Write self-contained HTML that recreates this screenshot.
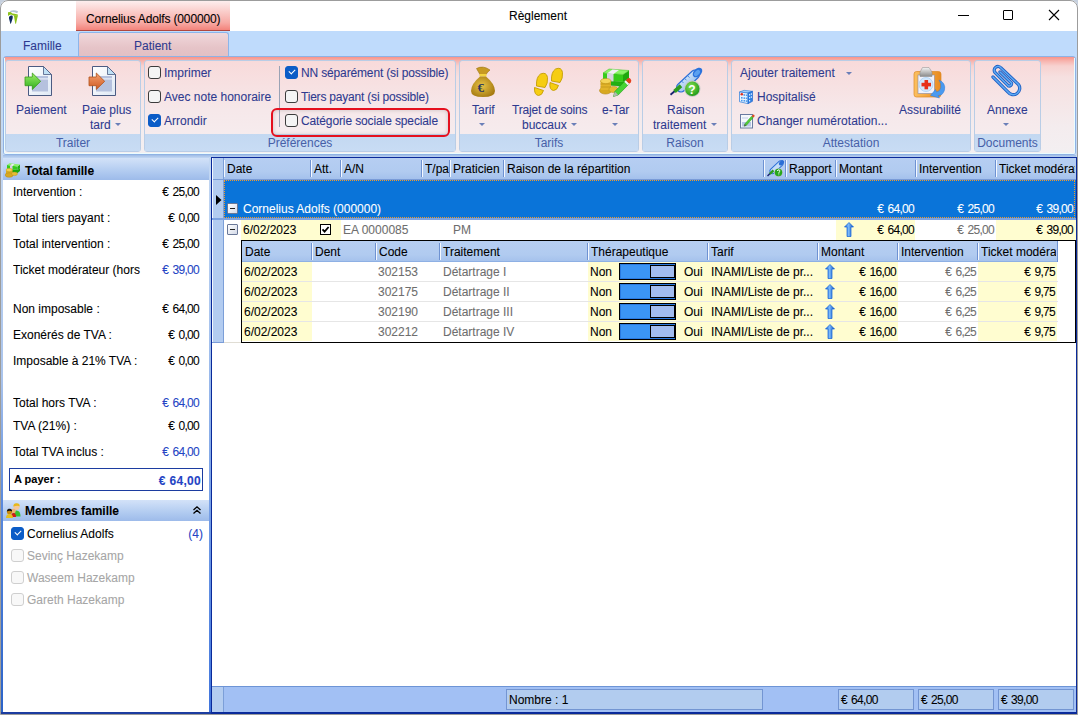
<!DOCTYPE html>
<html><head><meta charset="utf-8">
<style>
*{box-sizing:border-box}
html,body{margin:0;padding:0;width:1078px;height:715px;overflow:hidden;background:#c6d0de}
body{font-family:"Liberation Sans",sans-serif;font-size:12px;position:relative}
.a{position:absolute}
.t{position:absolute;white-space:nowrap;line-height:14px;-webkit-text-stroke:0.08px currentColor}
.n{font-size:12px;letter-spacing:-0.7px;word-spacing:1.5px}
.r{text-align:right}
.n.r{margin-right:0}
#win{position:absolute;left:0;top:0;width:1078px;height:715px;background:#c4d9f2;overflow:hidden;border-radius:8px 8px 0 0}
#frame{position:absolute;left:0;top:0;width:1078px;height:715px;border:1px solid #9c9c9c;border-radius:8px 8px 0 0;pointer-events:none}
#title{position:absolute;left:0;top:0;width:1078px;height:31px;background:#fff}
#tabrow{position:absolute;left:0;top:31px;width:1078px;height:26px;background:#bfdbfc}
#ctx{position:absolute;left:76px;top:1px;width:154px;height:30px;background:linear-gradient(#fdeeee,#f7aaa4 75%,#f3837b);border-bottom:1px solid #b0473f}
#ribbon{position:absolute;left:3px;top:56px;width:1073px;height:99px;border:1px solid #8fb2e4;border-radius:3px;background:linear-gradient(#f8948a 0,#f7b4ae 4px,#f7d2d0 9px,#f6e0e0 20px,#f4ecee 70px,#f3eff1 96px)}
#ribbon::after{content:"";position:absolute;left:0;right:0;top:1px;bottom:0;border:1px solid #eafcff;border-top:none;border-radius:0 0 2px 2px}
#below{position:absolute;left:3px;top:155px;width:1073px;height:3px;background:linear-gradient(#9fbce6,#c2d7f3)}
.grp{position:absolute;top:3px;height:92px;border:1px solid #b9cde6;border-radius:3px;background:linear-gradient(#f8dada,#f6e8ea 55%,#f6eef0)}
.glab{position:absolute;left:0;right:0;bottom:0;height:17px;background:linear-gradient(#c3d8f1,#c8dcf4);color:#4660a8;text-align:center;line-height:19px;font-size:12px}
.rb{color:#2e3a8f}
.cb{position:absolute;width:13px;height:13px;border:1px solid #3b3b3b;border-radius:3px;background:#f4f4f4}
.cb.on{background:#0b5cc7;border-color:#0b5cc7}
.cb.on::after{content:"";position:absolute;left:3px;top:2px;width:5px;height:3px;border-left:1px solid #fff;border-bottom:1px solid #fff;transform:rotate(-45deg)}
.arr{position:absolute;width:0;height:0;border-left:3px solid transparent;border-right:3px solid transparent;border-top:3px solid #6a7fb8}
/* left panel */
#lp{position:absolute;left:3px;top:157px;width:206px;height:556px;background:#fff}
.ph{position:absolute;left:0;width:206px;height:22px;background:linear-gradient(#d3e2f8,#b4cdf1 55%,#9dbbea);font-weight:bold;color:#000}
.blue{color:#2444c4}
/* grid */
#grid{position:absolute;left:210px;top:157px;width:866px;height:556px;background:#fff;border:2px solid #1c3faa;border-right:1px solid #1c3faa;border-top:1px solid #1c3faa}
.hdr{position:absolute;height:21px;background:#b1cbf0}
.sep{position:absolute;width:2px;border-left:1px solid #7b9fd6;border-right:1px solid #e3ecfa}
.yel{position:absolute;background:#fdfbd3}
.gray{color:#6e6e6e}
</style></head><body>
<div id="win">
  <div id="title">
    <svg class="a" style="left:0;top:0" width="30" height="30" viewBox="0 0 30 30">
      <path d="M10 11 Q14 9.3 18 11.3 Q17.8 12.8 17 13.2 Q14 11.5 10.5 12.2 Z" fill="#b4c4d4"/>
      <path d="M8 12.3 L10.5 12 L12.5 13.5 L14.5 13.8 L17.8 14.6 L17.8 15.8 L13.5 15.4 L11 14.4 L9.5 15 L8 16 Z" fill="#8cc21c"/>
      <path d="M9 17 Q10 14.8 12.3 15.6 Q13.2 16.8 12.6 18.5 L10.9 23.8 L10.4 23.8 L9 18.5 Z" fill="#0e2c5c"/>
      <path d="M13.8 15.2 L17.9 15.5 L16 23.8 L15.3 23.8 Z" fill="#8cc21c"/>
    </svg>
    <div class="t" style="left:509px;top:9px;color:#000">Règlement</div>
    <div class="a" style="left:958px;top:15px;width:11px;height:1px;background:#000"></div>
    <div class="a" style="left:1003px;top:10px;width:10px;height:10px;border:1px solid #000;border-radius:1px"></div>
    <svg class="a" style="left:1048px;top:9px" width="12" height="12" viewBox="0 0 12 12"><path d="M1 1 L11 11 M11 1 L1 11" stroke="#000" stroke-width="1.1"/></svg>
  </div>
  <div id="tabrow">
    <div class="t rb" style="left:23px;top:8px">Famille</div>
    <div class="a" style="left:78px;top:1px;width:151px;height:25px;border:1px solid #8cb5ea;border-bottom:none;border-radius:3px 3px 0 0;background:linear-gradient(#f0d8db,#e6c4c8 60%,#e2c0c4)"></div>
    <div class="t rb" style="left:134px;top:8px">Patient</div>
  </div>
  <div id="ctx"><div class="t" style="left:10px;top:11px;color:#000;letter-spacing:-0.15px">Cornelius Adolfs (000000)</div></div>

  <div id="ribbon"></div><div id="below"></div>
  <!-- ribbon groups in screen coords -->
  <div class="grp" style="left:5px;top:60px;width:136px"><div class="glab">Traiter</div></div>
  <div class="grp" style="left:144px;top:60px;width:312px"><div class="glab">Préférences</div></div>
  <div class="grp" style="left:459px;top:60px;width:180px"><div class="glab">Tarifs</div></div>
  <div class="grp" style="left:642px;top:60px;width:86px"><div class="glab">Raison</div></div>
  <div class="grp" style="left:731px;top:60px;width:240px"><div class="glab">Attestation</div></div>
  <div class="grp" style="left:974px;top:60px;width:67px"><div class="glab">Documents</div></div>

  <div id="rc">
  <!-- Traiter -->
  <svg class="a" style="left:20px;top:60px" width="40" height="40" viewBox="0 0 40 40">
    <defs>
      <linearGradient id="pg" x1="0" y1="0" x2="1" y2="1"><stop offset="0" stop-color="#ffffff"/><stop offset="1" stop-color="#dfe9f5"/></linearGradient>
      <linearGradient id="gA" x1="0" y1="0" x2="0" y2="1"><stop offset="0" stop-color="#9ef06a"/><stop offset="1" stop-color="#2fae1c"/></linearGradient>
      <linearGradient id="oA" x1="0" y1="0" x2="0" y2="1"><stop offset="0" stop-color="#f5a070"/><stop offset="1" stop-color="#cf5a22"/></linearGradient>
    </defs>
    <path d="M8.5 6.5 H23.5 L31.5 14.5 V35.5 H8.5 Z" fill="url(#pg)" stroke="#4b5b82"/>
    <path d="M23.5 6.5 V14.5 H31.5 Z" fill="#bfe0f5" stroke="#4b5b82" stroke-width="0.8"/>
    <rect x="12" y="16" width="16" height="15.5" fill="#b5c1de"/>
    <rect x="12" y="18.3" width="16" height="1.2" fill="#e9eef8"/>
    <path d="M5 17 H12.3 V13 L20.7 21.3 L12.3 29.5 V25.7 H5 Z" fill="url(#gA)" stroke="#3a9a1a" stroke-width="0.8"/>
  </svg>
  <svg class="a" style="left:84px;top:60px" width="40" height="40" viewBox="0 0 40 40">
    <path d="M8.5 6.5 H23.5 L31.5 14.5 V35.5 H8.5 Z" fill="url(#pg)" stroke="#4b5b82"/>
    <path d="M23.5 6.5 V14.5 H31.5 Z" fill="#bfe0f5" stroke="#4b5b82" stroke-width="0.8"/>
    <rect x="12" y="16" width="16" height="15.5" fill="#b5c1de"/>
    <rect x="12" y="18.3" width="16" height="1.2" fill="#e9eef8"/>
    <path d="M5 17 H12.3 V13 L20.7 21.3 L12.3 29.5 V25.7 H5 Z" fill="url(#oA)" stroke="#b0501a" stroke-width="0.8"/>
  </svg>
  <div class="t rb" style="left:16px;top:103px">Paiement</div>
  <div class="t rb" style="left:82px;top:103px">Paie plus</div>
  <div class="t rb" style="left:90px;top:118px">tard</div>
  <div class="arr" style="left:115px;top:123px"></div>

  <!-- Preferences -->
  <div class="cb" style="left:148px;top:66px"></div><div class="t rb" style="left:164px;top:66px">Imprimer</div>
  <div class="cb" style="left:148px;top:90px"></div><div class="t rb" style="left:164px;top:90px">Avec note honoraire</div>
  <div class="cb on" style="left:148px;top:114px"></div><div class="t rb" style="left:164px;top:114px">Arrondir</div>
  <div class="a" style="left:279px;top:66px;width:1px;height:61px;background:#9aa3b5"></div>
  <div class="cb on" style="left:285px;top:66px"></div><div class="t rb" style="left:301px;top:66px;letter-spacing:-0.15px">NN séparément (si possible)</div>
  <div class="cb" style="left:285px;top:90px"></div><div class="t rb" style="left:301px;top:90px;letter-spacing:-0.2px">Tiers payant (si possible)</div>
  <div class="cb" style="left:285px;top:114px"></div><div class="t rb" style="left:301px;top:114px;letter-spacing:-0.12px">Catégorie sociale speciale</div>
  <div class="a" style="left:271px;top:108px;width:179px;height:29px;border:2px solid #e5101e;border-radius:6px;box-shadow:inset 0 0 4px rgba(0,0,0,0.18)"></div>

  <!-- Tarifs -->
  <svg class="a" style="left:465px;top:60px" width="40" height="40" viewBox="0 0 40 40">
    <defs><radialGradient id="bag" cx="0.45" cy="0.45" r="0.6"><stop offset="0" stop-color="#e9c548"/><stop offset="1" stop-color="#a57a10"/></radialGradient></defs>
    <path d="M11.5 8.5 Q18 5 25 10 Q22 12.5 21 14.5 H15 Q13.5 12 11.5 8.5 Z" fill="#c89a22" stroke="#9a7412" stroke-width="0.6"/>
    <rect x="14.5" y="14" width="7" height="2.5" fill="#f4d440"/>
    <path d="M15 16.5 Q6 24 6 31 Q6 37 18 37 Q30 37 30 31 Q30 24 21 16.5 Z" fill="url(#bag)"/>
    <text x="12.5" y="32" font-family="Liberation Serif" font-size="13" fill="#28345e" font-weight="bold">€</text>
  </svg>
  <svg class="a" style="left:528px;top:60px" width="44" height="40" viewBox="0 0 44 40">
    <g fill="#f6cd12" stroke="#c49d05" stroke-width="0.9">
      <path d="M8.5 26 Q8 17 12.5 14 Q18.5 11.5 19.5 17.5 Q20 23.5 17 27.5 Z"/>
      <path d="M6.5 27.5 L15.5 30.5 Q14 35.5 10.5 35.5 Q6 35 6.5 27.5 Z"/>
      <path d="M23.5 21 Q23 12 27.5 9 Q33.5 6.5 34.5 12.5 Q35 18.5 32 22.5 Z"/>
      <path d="M22 22.5 L30.5 25.5 Q29 30.5 25.5 30.5 Q21 30 22 22.5 Z"/>
    </g>
  </svg>
  <svg class="a" style="left:595px;top:60px" width="40" height="40" viewBox="0 0 40 40">
    <path d="M8 20 L28 22 L34 18 V22.5 L28 26.5 L8 24.5 Z" fill="#22b012" stroke="#1a9010" stroke-width="0.5"/>
    <path d="M8 13 L28 14.5 V22 L8 20 Z" fill="#36cc1a"/>
    <path d="M28 14.5 L34 10.5 V18 L28 22 Z" fill="#1fa80e"/>
    <path d="M8 13 L14 9 L34 10.5 L28 14.5 Z" fill="#8cf46a" stroke="#3ac020" stroke-width="0.5"/>
    <path d="M17.5 9.6 L24 10 L18.5 13.9 L12 13.4 Z" fill="#f2f0f6"/>
    <path d="M12 13.4 L18.5 13.9 V21.6 L12 21 Z" fill="#d6d4de"/>
    <ellipse cx="10.5" cy="30.5" rx="6" ry="3.6" fill="#d8a820" stroke="#a88010" stroke-width="0.5"/>
    <rect x="5.5" y="21" width="10.5" height="9" fill="#e2b42a"/>
    <path d="M5.5 24 H16 M5.5 27 H16" stroke="#b88e14" stroke-width="0.6"/>
    <ellipse cx="10.8" cy="21" rx="5.3" ry="2.6" fill="#f4d458" stroke="#b88e14" stroke-width="0.5"/>
    <ellipse cx="18.5" cy="29.5" rx="4.5" ry="3" fill="#e6bb32" stroke="#b08a12" stroke-width="0.5"/>
    <path d="M18.5 36.5 L19.8 31.5 L30.5 20.5 L34 24 L23.2 35 Z" fill="#46d434" stroke="#1f9a16" stroke-width="0.6"/>
    <path d="M18.5 36.5 L19.8 31.5 L23.2 35 Z" fill="#b4b4b4"/>
    <path d="M29.3 21.7 L30.8 20.2 L34.3 23.7 L32.8 25.2 Z" fill="#f4f4f4"/>
    <path d="M30.8 20.2 L32.3 18.7 Q34 17.3 35.6 18.9 Q37 20.6 35.8 22.2 L34.3 23.7 Z" fill="#e4401e"/>
  </svg>
  <div class="t rb" style="left:472px;top:103px">Tarif</div>
  <div class="arr" style="left:479px;top:123px"></div>
  <div class="t rb" style="left:512px;top:103px;letter-spacing:-0.2px">Trajet de soins</div>
  <div class="t rb" style="left:522px;top:118px">buccaux</div>
  <div class="arr" style="left:571px;top:123px"></div>
  <div class="t rb" style="left:602px;top:103px">e-Tar</div>
  <div class="arr" style="left:612px;top:123px"></div>

  <!-- Raison -->
  <svg class="a" style="left:662px;top:60px" width="44" height="40" viewBox="0 0 44 40">
    <defs><radialGradient id="qg" cx="0.4" cy="0.35" r="0.7"><stop offset="0" stop-color="#86e254"/><stop offset="1" stop-color="#1c9816"/></radialGradient>
    <linearGradient id="syb" x1="0" y1="0" x2="1" y2="1"><stop offset="0" stop-color="#e4f0fc"/><stop offset="1" stop-color="#8ab8ec"/></linearGradient></defs>
    <line x1="8.5" y1="34.8" x2="14" y2="30" stroke="#1a2470" stroke-width="1.8"/>
    <line x1="19" y1="27.5" x2="33" y2="14.5" stroke="#2a6ed6" stroke-width="10" stroke-linecap="round"/>
    <line x1="19" y1="27.5" x2="33" y2="14.5" stroke="url(#syb)" stroke-width="7.6" stroke-linecap="round"/>
    <path d="M19.5 21 l2 2 M22.5 18.3 l2 2 M25.5 15.6 l2 2" stroke="#3a80e0" stroke-width="0.9"/>
    <ellipse cx="35.5" cy="12.5" rx="3.8" ry="5.6" transform="rotate(45 35.5 12.5)" fill="#2a72dc"/>
    <ellipse cx="35" cy="13" rx="2.2" ry="3.6" transform="rotate(45 35 13)" fill="#5aa0f0"/>
    <line x1="12.5" y1="31.5" x2="19" y2="25.8" stroke="#2c9c20" stroke-width="3.8"/>
    <circle cx="30.3" cy="28.8" r="8.2" fill="#c8c8c8"/>
    <circle cx="30.3" cy="28.8" r="7.2" fill="url(#qg)"/>
    <text x="26.2" y="33.5" font-family="Liberation Sans" font-size="12" font-weight="bold" fill="#fff">?</text>
  </svg>
  <div class="t rb" style="left:667px;top:103px">Raison</div>
  <div class="t rb" style="left:653px;top:118px">traitement</div>
  <div class="arr" style="left:711px;top:123px"></div>

  <!-- Attestation -->
  <div class="t rb" style="left:740px;top:66px">Ajouter traitement</div>
  <div class="arr" style="left:846px;top:72px"></div>
  <svg class="a" style="left:738px;top:89px" width="16" height="16" viewBox="0 0 16 16">
    <path d="M1.5 3 L6 1.3 L14.5 2.3 L10 4 Z" fill="#a4d0fa" stroke="#2a7ad8" stroke-width="0.6"/>
    <path d="M1.5 3 L10 4 V14.7 L1.5 12.7 Z" fill="#eaf5ff" stroke="#2a7ad8" stroke-width="0.7"/>
    <path d="M10 4 L14.5 2.3 V12.3 L10 14.7 Z" fill="#2f80e4" stroke="#1a5ec8" stroke-width="0.6"/>
    <g fill="#4a9aee"><rect x="5.5" y="5.2" width="1.6" height="1.6"/><rect x="7.8" y="5.5" width="1.6" height="1.6"/>
    <rect x="3" y="8" width="1.6" height="1.6"/><rect x="5.5" y="8.3" width="1.6" height="1.6"/><rect x="7.8" y="8.5" width="1.6" height="1.6"/>
    <rect x="3" y="10.8" width="1.6" height="1.6"/><rect x="5.5" y="11" width="1.6" height="1.6"/><rect x="7.8" y="11.3" width="1.6" height="1.6"/></g>
    <g fill="#d8ecff"><rect x="11" y="5" width="1.2" height="1.5"/><rect x="12.8" y="4.3" width="1.2" height="1.5"/><rect x="11" y="8" width="1.2" height="1.5"/><rect x="12.8" y="7.3" width="1.2" height="1.5"/><rect x="11" y="11" width="1.2" height="1.5"/></g>
    <circle cx="3.8" cy="5.2" r="1.3" fill="#e03020"/>
  </svg>
  <div class="t rb" style="left:757px;top:90px">Hospitalisé</div>
  <svg class="a" style="left:739px;top:112px" width="16" height="17" viewBox="0 0 16 17">
    <rect x="1.5" y="2.5" width="12" height="13.5" fill="#f6f8fc" stroke="#6a7aa0"/>
    <rect x="3" y="10" width="9" height="4.5" fill="#b8c6e4"/>
    <path d="M3 6 h6" stroke="#c0cce6"/>
    <path d="M5.2 14.2 L5.8 12 L12.6 4.2 L14.2 5.6 L7.3 13.4 Z" fill="#52cc36" stroke="#2a9a1a" stroke-width="0.5"/>
    <path d="M12.6 4.2 L13.6 3 Q14.6 2.2 15.4 3 Q16 4 15.2 4.8 L14.2 5.6 Z" fill="#e44a22"/>
    <path d="M5.2 14.2 L5.8 12 L7.3 13.4 Z" fill="#555"/>
  </svg>
  <div class="t rb" style="left:757px;top:114px;letter-spacing:0.05px">Changer numérotation...</div>
  <svg class="a" style="left:905px;top:60px" width="50" height="40" viewBox="0 0 50 40">
    <defs><linearGradient id="cbd" x1="0" y1="0" x2="1" y2="0"><stop offset="0" stop-color="#fcc060"/><stop offset="1" stop-color="#e88a20"/></linearGradient>
    <linearGradient id="clp" x1="0" y1="0" x2="0" y2="1"><stop offset="0" stop-color="#f4f4f4"/><stop offset="1" stop-color="#8a8a8a"/></linearGradient></defs>
    <rect x="9" y="11.5" width="27" height="25.5" rx="2.5" fill="url(#cbd)" stroke="#dc8a24" stroke-width="0.7"/>
    <rect x="13" y="15" width="16.5" height="18.5" fill="#f2f2fb" stroke="#8888a0" stroke-width="0.6"/>
    <path d="M15 16.5 V12 L17.5 7.5 H24 L27 12 V16.5 Z" fill="url(#clp)" stroke="#888" stroke-width="0.5"/>
    <circle cx="21" cy="24.5" r="7" fill="#d4e8fc" stroke="#a8d0f6" stroke-width="0.8"/>
    <rect x="16.5" y="22.8" width="9.5" height="3.6" fill="#e8301a"/>
    <rect x="19.5" y="20" width="3.6" height="9.3" fill="#e8301a"/>
    <path d="M34 20 Q41 23 39.5 30 Q38 35.5 33 35.5 L34.5 38 L25.5 35.5 L30.5 29.5 L31.5 32 Q35 31.5 35.8 27.5 Q36.5 23.5 34 20 Z" fill="#4a9af0" stroke="#2f7ad8" stroke-width="0.5"/>
  </svg>
  <div class="t rb" style="left:899px;top:103px">Assurabilité</div>

  <!-- Documents -->
  <svg class="a" style="left:983px;top:60px" width="45" height="40" viewBox="0 0 45 40">
    <path d="M10 17 L25 32 A6 6 0 0 0 35.5 24.5 L18 8 A3.5 3.5 0 0 0 12 12.5 L25.5 26 A2.5 2.5 0 0 0 28.5 23 L17 12" fill="none" stroke="#2060c4" stroke-width="3.3" stroke-linecap="round"/>
    <path d="M10 17 L25 32 A6 6 0 0 0 35.5 24.5 L18 8 A3.5 3.5 0 0 0 12 12.5 L25.5 26 A2.5 2.5 0 0 0 28.5 23 L17 12" fill="none" stroke="#5eaaf4" stroke-width="1.5" stroke-linecap="round"/>
  </svg>
  <div class="t rb" style="left:987px;top:103px">Annexe</div>
  <div class="arr" style="left:1003px;top:123px"></div>
</div>
  <div class="a" style="left:1px;top:154px;width:2px;height:560px;background:linear-gradient(#c4d8f2,#aac4ec 40%,#5a8ade 62%,#2a62c8);border-radius:0 0 0 4px"></div>
<div class="a" style="left:209px;top:157px;width:2px;height:557px;background:linear-gradient(#c4d8f2,#a8c4ee 30%,#7aa2e6 60%,#3f74dc)"></div>
<div class="a" style="left:3px;top:180px;width:206px;height:532px;background:#fff"></div>
<div class="ph" style="left:3px;top:158px;height:22px"></div>
<svg class="a" style="left:4px;top:161px" width="18" height="17" viewBox="0 0 18 17">
      <path d="M3 7.5 L13.5 9 L16 7 V10 L13.5 12 L3 10.5 Z" fill="#1aa80e"/>
      <path d="M3 4 L13.5 5.5 V9 L3 7.5 Z" fill="#34cc1a"/>
      <path d="M13.5 5.5 L16 3.5 V7 L13.5 9 Z" fill="#20b010"/>
      <path d="M3 4 L5.5 2.3 L16 3.5 L13.5 5.5 Z" fill="#8cf06a"/>
      <path d="M8 2.9 L10.5 3.2 L8.5 4.9 L6 4.6 Z" fill="#f0e8f8"/>
      <path d="M6 4.6 L8.5 4.9 V8.4 L6 8.1 Z" fill="#d8cce6"/>
      <rect x="2" y="9" width="6.5" height="5" fill="#dcae22"/>
      <ellipse cx="5.2" cy="14" rx="4" ry="2.3" fill="#d8a820" stroke="#b08810" stroke-width="0.4"/>
      <ellipse cx="5.2" cy="9" rx="3.2" ry="1.7" fill="#f2d050" stroke="#b88e14" stroke-width="0.4"/>
      <ellipse cx="10.5" cy="12.8" rx="3" ry="1.8" fill="#e8bd34" stroke="#b08a12" stroke-width="0.4"/>
    </svg>
<div class="t " style="left:25px;top:164px;font-weight:bold;font-size:12px">Total famille</div>
<div class="t" style="left:13px;top:185px;width:129px;overflow:hidden">Intervention :</div>
<div class="t n r " style="right:879px;top:185px;">€ 25,00</div>
<div class="t" style="left:13px;top:211px;width:129px;overflow:hidden">Total tiers payant :</div>
<div class="t n r " style="right:879px;top:211px;">€ 0,00</div>
<div class="t" style="left:13px;top:237px;width:129px;overflow:hidden">Total intervention :</div>
<div class="t n r " style="right:879px;top:237px;">€ 25,00</div>
<div class="t" style="left:13px;top:263px;width:129px;overflow:hidden">Ticket modérateur (hors TVA) :</div>
<div class="t n r blue" style="right:879px;top:263px;">€ 39,00</div>
<div class="t" style="left:13px;top:302px;width:129px;overflow:hidden">Non imposable :</div>
<div class="t n r " style="right:879px;top:302px;">€ 64,00</div>
<div class="t" style="left:13px;top:328px;width:129px;overflow:hidden">Exonérés de TVA :</div>
<div class="t n r " style="right:879px;top:328px;">€ 0,00</div>
<div class="t" style="left:13px;top:354px;width:129px;overflow:hidden">Imposable à 21% TVA :</div>
<div class="t n r " style="right:879px;top:354px;">€ 0,00</div>
<div class="t" style="left:13px;top:396px;width:129px;overflow:hidden">Total hors TVA :</div>
<div class="t n r blue" style="right:879px;top:396px;">€ 64,00</div>
<div class="t" style="left:13px;top:419px;width:129px;overflow:hidden">TVA (21%) :</div>
<div class="t n r " style="right:879px;top:419px;">€ 0,00</div>
<div class="t" style="left:13px;top:445px;width:129px;overflow:hidden">Total TVA inclus :</div>
<div class="t n r blue" style="right:879px;top:445px;">€ 64,00</div>
<div class="a" style="left:9px;top:468px;width:194px;height:23px;border:1px solid #1c3ca0"></div>
<div class="t " style="left:14px;top:472px;font-weight:bold;font-size:11px">A payer :</div>
<div class="t r blue" style="right:879px;top:474px;font-weight:bold;font-size:12px;letter-spacing:0.3px;margin-right:-2px">€ 64,00</div>
<div class="ph" style="left:3px;top:500px;height:21px"></div>
<svg class="a" style="left:5px;top:502px" width="17" height="17" viewBox="0 0 17 17">
    <circle cx="11.5" cy="5" r="3" fill="#f5c89a"/><path d="M8.3 4.5 Q8.5 1 11.5 1.2 Q14.8 1 14.7 4.5 Q13 2.8 8.3 4.5 Z" fill="#e8b818"/>
    <path d="M7.5 14.5 Q7.5 8.5 11.5 8.5 Q15.5 8.5 15.5 14.5 Z" fill="#38c030"/>
    <circle cx="8.5" cy="9" r="2.3" fill="#f0b070"/>
    <path d="M6 15 Q6 11 8.5 11 Q11 11 11 15 Z" fill="#d01818"/>
    <circle cx="4.5" cy="9.8" r="2.6" fill="#c88a10"/><path d="M1.8 9.5 Q2 6.5 4.5 6.8 Q7.3 6.8 7 9.5 Q5 8 1.8 9.5 Z" fill="#111"/>
    <path d="M1 16 Q1 12 4.5 12 Q8 12 8 16 Z" fill="#e6c020"/>
  </svg>
<div class="t " style="left:25px;top:504px;font-weight:bold;font-size:12px">Membres famille</div>
<svg class="a" style="left:192px;top:505px" width="10" height="10" viewBox="0 0 10 10"><path d="M1.5 5 L5 1.8 L8.5 5 M1.5 8.5 L5 5.3 L8.5 8.5" fill="none" stroke="#000" stroke-width="1.3"/></svg>
<div class="cb on" style="left:11px;top:527px"></div>
<div class="t " style="left:27px;top:527px;">Cornelius Adolfs</div>
<div class="t blue r" style="right:875px;top:527px">(4)</div>
<div class="cb" style="left:11px;top:549px;border-color:#cfcfcf;background:#f8f8f8"></div>
<div class="t " style="left:27px;top:549px;color:#a6a6a6">Sevinç Hazekamp</div>
<div class="cb" style="left:11px;top:571px;border-color:#cfcfcf;background:#f8f8f8"></div>
<div class="t " style="left:27px;top:571px;color:#a6a6a6">Waseem Hazekamp</div>
<div class="cb" style="left:11px;top:593px;border-color:#cfcfcf;background:#f8f8f8"></div>
<div class="t " style="left:27px;top:593px;color:#a6a6a6">Gareth Hazekamp</div>
<div class="a" style="left:1px;top:712px;width:210px;height:2px;background:#1c3ca0"></div>
  <div class="a" style="left:211px;top:157px;width:866px;height:557px;background:#fff"></div>
<div class="a" style="left:212px;top:158px;width:12px;height:185px;background:#b3ccf0"></div>
<div class="a" style="left:223px;top:158px;width:1px;height:185px;background:#7c9fd8"></div>
<div class="a" style="left:224px;top:158px;width:852px;height:21px;background:linear-gradient(#b6cef2,#b1cbf0 65%,#a4c1ec)"></div>
<div class="a" style="left:212px;top:179px;width:864px;height:1px;background:#7a9cd8"></div>
<div class="a" style="left:310px;top:160px;width:1px;height:17px;background:#6e92d2"></div><div class="a" style="left:311px;top:160px;width:1px;height:17px;background:#f4f8ff"></div>
<div class="a" style="left:340px;top:160px;width:1px;height:17px;background:#6e92d2"></div><div class="a" style="left:341px;top:160px;width:1px;height:17px;background:#f4f8ff"></div>
<div class="a" style="left:421px;top:160px;width:1px;height:17px;background:#6e92d2"></div><div class="a" style="left:422px;top:160px;width:1px;height:17px;background:#f4f8ff"></div>
<div class="a" style="left:449px;top:160px;width:1px;height:17px;background:#6e92d2"></div><div class="a" style="left:450px;top:160px;width:1px;height:17px;background:#f4f8ff"></div>
<div class="a" style="left:503px;top:160px;width:1px;height:17px;background:#6e92d2"></div><div class="a" style="left:504px;top:160px;width:1px;height:17px;background:#f4f8ff"></div>
<div class="a" style="left:763px;top:160px;width:1px;height:17px;background:#6e92d2"></div><div class="a" style="left:764px;top:160px;width:1px;height:17px;background:#f4f8ff"></div>
<div class="a" style="left:785px;top:160px;width:1px;height:17px;background:#6e92d2"></div><div class="a" style="left:786px;top:160px;width:1px;height:17px;background:#f4f8ff"></div>
<div class="a" style="left:835px;top:160px;width:1px;height:17px;background:#6e92d2"></div><div class="a" style="left:836px;top:160px;width:1px;height:17px;background:#f4f8ff"></div>
<div class="a" style="left:915px;top:160px;width:1px;height:17px;background:#6e92d2"></div><div class="a" style="left:916px;top:160px;width:1px;height:17px;background:#f4f8ff"></div>
<div class="a" style="left:995px;top:160px;width:1px;height:17px;background:#6e92d2"></div><div class="a" style="left:996px;top:160px;width:1px;height:17px;background:#f4f8ff"></div>
<div class="a" style="left:212px;top:158px;width:1px;height:185px;background:#f4f8ff"></div>
<div class="a" style="left:224px;top:160px;width:1px;height:17px;background:#f4f8ff"></div>
<div class="t" style="left:227px;top:162px;">Date</div>
<div class="t" style="left:314px;top:162px;">Att.</div>
<div class="t" style="left:344px;top:162px;">A/N</div>
<div class="t" style="left:425px;top:162px;width:24px;overflow:hidden;">T/pa</div>
<div class="t" style="left:453px;top:162px;">Praticien</div>
<div class="t" style="left:507px;top:162px;">Raison de la répartition</div>
<div class="t" style="left:789px;top:162px;">Rapport</div>
<div class="t" style="left:839px;top:162px;">Montant</div>
<div class="t" style="left:919px;top:162px;">Intervention</div>
<div class="t" style="left:999px;top:162px;width:76px;overflow:hidden;">Ticket modérateur</div>
<svg class="a" style="left:766px;top:159px" width="19" height="19" viewBox="0 0 19 19"><line x1="1.5" y1="17" x2="4.5" y2="14" stroke="#1a2470" stroke-width="1.4"/><line x1="6.5" y1="12" x2="14.5" y2="4.5" stroke="#2a6ed6" stroke-width="6" stroke-linecap="round"/><line x1="6.5" y1="12" x2="14.5" y2="4.5" stroke="#c4def8" stroke-width="4.2" stroke-linecap="round"/><ellipse cx="15.5" cy="3.8" rx="2" ry="3" transform="rotate(45 15.5 3.8)" fill="#2a6ed6"/><line x1="3.8" y1="14.8" x2="7.5" y2="11.3" stroke="#2c9c20" stroke-width="2.4"/><circle cx="12.5" cy="13.5" r="4.3" fill="#b8b8c0"/><circle cx="12.5" cy="13.5" r="3.7" fill="#26a81a"/><path d="M11.3 12 Q11.8 10.6 13 10.8 Q14.3 11.2 13.6 12.6 Q12.8 13.4 12.8 14.6 M12.8 15.6 V16.2" stroke="#fff" stroke-width="1" fill="none"/></svg>
<div class="a" style="left:224px;top:180px;width:852px;height:38px;background:#0a74d9"></div>
<div class="a" style="left:224px;top:180px;width:851px;height:38px;border:1px dotted #f39a2b"></div>
<div class="a" style="left:212px;top:218px;width:864px;height:2px;background:#7da3e2"></div>
<svg class="a" style="left:215px;top:194px" width="8" height="12" viewBox="0 0 8 12"><path d="M1 1 L6.5 6 L1 11 Z" fill="#000"/></svg>
<div class="a" style="left:227px;top:203px;width:11px;height:11px;border:1px solid #6a7898;border-radius:1px;background:linear-gradient(135deg,#ffffff,#d3d9e8)"></div><div class="a" style="left:230px;top:208px;width:5px;height:1px;background:#222"></div>
<div class="t" style="left:243px;top:202px;color:#fff">Cornelius Adolfs (000000)</div>
<div class="t n r" style="right:164px;top:202px;color:#fff">€ 64,00</div>
<div class="t n r" style="right:84px;top:202px;color:#fff">€ 25,00</div>
<div class="t n r" style="right:5px;top:202px;color:#fff">€ 39,00</div>
<div class="a" style="left:227px;top:224px;width:11px;height:11px;border:1px solid #6a7898;border-radius:1px;background:linear-gradient(135deg,#ffffff,#d3d9e8)"></div><div class="a" style="left:230px;top:229px;width:5px;height:1px;background:#222"></div>
<div class="a" style="left:241px;top:220px;width:100px;height:20px;background:#fffdd0"></div>
<div class="a" style="left:836px;top:220px;width:79px;height:20px;background:#fffdd0"></div>
<div class="a" style="left:996px;top:220px;width:80px;height:20px;background:#fffdd0"></div>
<div class="t" style="left:243px;top:223px">6/02/2023</div>
<div class="a" style="left:320px;top:224px;width:11px;height:11px;border:1.5px solid #000;background:#fff"></div>
<svg class="a" style="left:320px;top:224px" width="11" height="11" viewBox="0 0 11 11"><path d="M2.5 5.3 L4.6 7.6 L8.6 3" fill="none" stroke="#000" stroke-width="1.8"/></svg>
<div class="t gray" style="left:343px;top:223px">EA 0000085</div>
<div class="t gray" style="left:453px;top:223px">PM</div>
<svg class="a" style="left:844px;top:222px" width="10" height="15" viewBox="0 0 10 15"><defs><linearGradient id="ua844222" x1="0" x2="1"><stop offset="0" stop-color="#1a6ae0"/><stop offset="0.45" stop-color="#7ab8f8"/><stop offset="1" stop-color="#0a50c4"/></linearGradient></defs><path d="M5 0.5 L9.5 5 L7 5 L7 14.5 L3 14.5 L3 5 L0.5 5 Z" fill="url(#ua844222)" stroke="#1060d8" stroke-width="0.7"/></svg>
<div class="t n r" style="right:164px;top:223px">€ 64,00</div>
<div class="t n r gray" style="right:84px;top:223px">€ 25,00</div>
<div class="t n r" style="right:5px;top:223px">€ 39,00</div>
<div class="a" style="left:241px;top:240px;width:835px;height:103px;border:1px solid #000;background:#fff"></div>
<div class="a" style="left:242px;top:241px;width:815px;height:21px;background:linear-gradient(#b6cef2,#b1cbf0 65%,#a4c1ec)"></div>
<div class="a" style="left:242px;top:261px;width:815px;height:1px;background:#8eb0e4"></div>
<div class="a" style="left:311px;top:243px;width:1px;height:17px;background:#6e92d2"></div><div class="a" style="left:312px;top:243px;width:1px;height:17px;background:#f4f8ff"></div>
<div class="a" style="left:375px;top:243px;width:1px;height:17px;background:#6e92d2"></div><div class="a" style="left:376px;top:243px;width:1px;height:17px;background:#f4f8ff"></div>
<div class="a" style="left:439px;top:243px;width:1px;height:17px;background:#6e92d2"></div><div class="a" style="left:440px;top:243px;width:1px;height:17px;background:#f4f8ff"></div>
<div class="a" style="left:587px;top:243px;width:1px;height:17px;background:#6e92d2"></div><div class="a" style="left:588px;top:243px;width:1px;height:17px;background:#f4f8ff"></div>
<div class="a" style="left:707px;top:243px;width:1px;height:17px;background:#6e92d2"></div><div class="a" style="left:708px;top:243px;width:1px;height:17px;background:#f4f8ff"></div>
<div class="a" style="left:817px;top:243px;width:1px;height:17px;background:#6e92d2"></div><div class="a" style="left:818px;top:243px;width:1px;height:17px;background:#f4f8ff"></div>
<div class="a" style="left:897px;top:243px;width:1px;height:17px;background:#6e92d2"></div><div class="a" style="left:898px;top:243px;width:1px;height:17px;background:#f4f8ff"></div>
<div class="a" style="left:977px;top:243px;width:1px;height:17px;background:#6e92d2"></div><div class="a" style="left:978px;top:243px;width:1px;height:17px;background:#f4f8ff"></div>
<div class="a" style="left:1057px;top:241px;width:1px;height:21px;background:#6e92d2"></div>
<div class="t" style="left:245px;top:245px;">Date</div>
<div class="t" style="left:315px;top:245px;">Dent</div>
<div class="t" style="left:379px;top:245px;">Code</div>
<div class="t" style="left:443px;top:245px;">Traitement</div>
<div class="t" style="left:591px;top:245px;">Thérapeutique</div>
<div class="t" style="left:711px;top:245px;">Tarif</div>
<div class="t" style="left:821px;top:245px;">Montant</div>
<div class="t" style="left:901px;top:245px;">Intervention</div>
<div class="t" style="left:981px;top:245px;width:75px;overflow:hidden;">Ticket modérateur</div>
<div class="a" style="left:242px;top:262px;width:70px;height:19px;background:#fffdd0"></div>
<div class="a" style="left:588px;top:262px;width:310px;height:19px;background:#fffdd0"></div>
<div class="a" style="left:978px;top:262px;width:79px;height:19px;background:#fffdd0"></div>
<div class="a" style="left:242px;top:281px;width:816px;height:1px;background:#e6e6e6"></div>
<div class="t" style="left:244px;top:265px">6/02/2023</div>
<div class="t gray" style="left:378px;top:265px">302153</div>
<div class="t gray" style="left:443px;top:265px">Détartrage I</div>
<div class="t" style="left:590px;top:265px">Non</div>
<div class="a" style="left:619px;top:263px;width:57px;height:17px;border:1px solid #000;background:#3b95f5;box-shadow:inset 0 0 0 1px #2a7ae0"></div>
<div class="a" style="left:650px;top:265px;width:25px;height:13px;border:1px solid #000;background:#a2bdf0"></div>
<div class="t" style="left:684px;top:265px">Oui</div>
<div class="t" style="left:711px;top:265px">INAMI/Liste de pr...</div>
<svg class="a" style="left:825px;top:264px" width="10" height="15" viewBox="0 0 10 15"><defs><linearGradient id="ua825264" x1="0" x2="1"><stop offset="0" stop-color="#1a6ae0"/><stop offset="0.45" stop-color="#7ab8f8"/><stop offset="1" stop-color="#0a50c4"/></linearGradient></defs><path d="M5 0.5 L9.5 5 L7 5 L7 14.5 L3 14.5 L3 5 L0.5 5 Z" fill="url(#ua825264)" stroke="#1060d8" stroke-width="0.7"/></svg>
<div class="t n r" style="right:182px;top:265px">€ 16,00</div>
<div class="t n r gray" style="right:102px;top:265px">€ 6,25</div>
<div class="t n r" style="right:23px;top:265px">€ 9,75</div>
<div class="a" style="left:242px;top:282px;width:70px;height:19px;background:#fffdd0"></div>
<div class="a" style="left:588px;top:282px;width:310px;height:19px;background:#fffdd0"></div>
<div class="a" style="left:978px;top:282px;width:79px;height:19px;background:#fffdd0"></div>
<div class="a" style="left:242px;top:301px;width:816px;height:1px;background:#e6e6e6"></div>
<div class="t" style="left:244px;top:285px">6/02/2023</div>
<div class="t gray" style="left:378px;top:285px">302175</div>
<div class="t gray" style="left:443px;top:285px">Détartrage II</div>
<div class="t" style="left:590px;top:285px">Non</div>
<div class="a" style="left:619px;top:283px;width:57px;height:17px;border:1px solid #000;background:#3b95f5;box-shadow:inset 0 0 0 1px #2a7ae0"></div>
<div class="a" style="left:650px;top:285px;width:25px;height:13px;border:1px solid #000;background:#a2bdf0"></div>
<div class="t" style="left:684px;top:285px">Oui</div>
<div class="t" style="left:711px;top:285px">INAMI/Liste de pr...</div>
<svg class="a" style="left:825px;top:284px" width="10" height="15" viewBox="0 0 10 15"><defs><linearGradient id="ua825284" x1="0" x2="1"><stop offset="0" stop-color="#1a6ae0"/><stop offset="0.45" stop-color="#7ab8f8"/><stop offset="1" stop-color="#0a50c4"/></linearGradient></defs><path d="M5 0.5 L9.5 5 L7 5 L7 14.5 L3 14.5 L3 5 L0.5 5 Z" fill="url(#ua825284)" stroke="#1060d8" stroke-width="0.7"/></svg>
<div class="t n r" style="right:182px;top:285px">€ 16,00</div>
<div class="t n r gray" style="right:102px;top:285px">€ 6,25</div>
<div class="t n r" style="right:23px;top:285px">€ 9,75</div>
<div class="a" style="left:242px;top:302px;width:70px;height:19px;background:#fffdd0"></div>
<div class="a" style="left:588px;top:302px;width:310px;height:19px;background:#fffdd0"></div>
<div class="a" style="left:978px;top:302px;width:79px;height:19px;background:#fffdd0"></div>
<div class="a" style="left:242px;top:321px;width:816px;height:1px;background:#e6e6e6"></div>
<div class="t" style="left:244px;top:305px">6/02/2023</div>
<div class="t gray" style="left:378px;top:305px">302190</div>
<div class="t gray" style="left:443px;top:305px">Détartrage III</div>
<div class="t" style="left:590px;top:305px">Non</div>
<div class="a" style="left:619px;top:303px;width:57px;height:17px;border:1px solid #000;background:#3b95f5;box-shadow:inset 0 0 0 1px #2a7ae0"></div>
<div class="a" style="left:650px;top:305px;width:25px;height:13px;border:1px solid #000;background:#a2bdf0"></div>
<div class="t" style="left:684px;top:305px">Oui</div>
<div class="t" style="left:711px;top:305px">INAMI/Liste de pr...</div>
<svg class="a" style="left:825px;top:304px" width="10" height="15" viewBox="0 0 10 15"><defs><linearGradient id="ua825304" x1="0" x2="1"><stop offset="0" stop-color="#1a6ae0"/><stop offset="0.45" stop-color="#7ab8f8"/><stop offset="1" stop-color="#0a50c4"/></linearGradient></defs><path d="M5 0.5 L9.5 5 L7 5 L7 14.5 L3 14.5 L3 5 L0.5 5 Z" fill="url(#ua825304)" stroke="#1060d8" stroke-width="0.7"/></svg>
<div class="t n r" style="right:182px;top:305px">€ 16,00</div>
<div class="t n r gray" style="right:102px;top:305px">€ 6,25</div>
<div class="t n r" style="right:23px;top:305px">€ 9,75</div>
<div class="a" style="left:242px;top:322px;width:70px;height:19px;background:#fffdd0"></div>
<div class="a" style="left:588px;top:322px;width:310px;height:19px;background:#fffdd0"></div>
<div class="a" style="left:978px;top:322px;width:79px;height:19px;background:#fffdd0"></div>
<div class="t" style="left:244px;top:325px">6/02/2023</div>
<div class="t gray" style="left:378px;top:325px">302212</div>
<div class="t gray" style="left:443px;top:325px">Détartrage IV</div>
<div class="t" style="left:590px;top:325px">Non</div>
<div class="a" style="left:619px;top:323px;width:57px;height:17px;border:1px solid #000;background:#3b95f5;box-shadow:inset 0 0 0 1px #2a7ae0"></div>
<div class="a" style="left:650px;top:325px;width:25px;height:13px;border:1px solid #000;background:#a2bdf0"></div>
<div class="t" style="left:684px;top:325px">Oui</div>
<div class="t" style="left:711px;top:325px">INAMI/Liste de pr...</div>
<svg class="a" style="left:825px;top:324px" width="10" height="15" viewBox="0 0 10 15"><defs><linearGradient id="ua825324" x1="0" x2="1"><stop offset="0" stop-color="#1a6ae0"/><stop offset="0.45" stop-color="#7ab8f8"/><stop offset="1" stop-color="#0a50c4"/></linearGradient></defs><path d="M5 0.5 L9.5 5 L7 5 L7 14.5 L3 14.5 L3 5 L0.5 5 Z" fill="url(#ua825324)" stroke="#1060d8" stroke-width="0.7"/></svg>
<div class="t n r" style="right:182px;top:325px">€ 16,00</div>
<div class="t n r gray" style="right:102px;top:325px">€ 6,25</div>
<div class="t n r" style="right:23px;top:325px">€ 9,75</div>
<div class="a" style="left:224px;top:342px;width:17px;height:1px;background:#e0ddd4"></div>
<div class="a" style="left:212px;top:342px;width:12px;height:1px;background:#7a9cd8"></div>
<div class="a" style="left:212px;top:686px;width:864px;height:1px;background:#6d94d6"></div>
<div class="a" style="left:212px;top:687px;width:864px;height:25px;background:#a2c0f4"></div>
<div class="a" style="left:212px;top:687px;width:12px;height:25px;background:#b4cdf0;border-right:1px solid #7c9fd8"></div>
<div class="a" style="left:506px;top:689px;width:257px;height:21px;border:1px solid #7395d2;background:#b2ccef"></div><div class="t" style="left:509px;top:693px">Nombre : 1</div>
<div class="a" style="left:838px;top:689px;width:76px;height:21px;border:1px solid #7395d2;background:#b2ccef"></div><div class="t" style="left:841px;top:693px"><span class="n">€ 64,00</span></div>
<div class="a" style="left:918px;top:689px;width:76px;height:21px;border:1px solid #7395d2;background:#b2ccef"></div><div class="t" style="left:921px;top:693px"><span class="n">€ 25,00</span></div>
<div class="a" style="left:998px;top:689px;width:76px;height:21px;border:1px solid #7395d2;background:#b2ccef"></div><div class="t" style="left:1001px;top:693px"><span class="n">€ 39,00</span></div>
<div class="a" style="left:211px;top:157px;width:866px;height:1px;background:#0a2a9a"></div>
<div class="a" style="left:211px;top:157px;width:1px;height:557px;background:#0a2a9a"></div>
<div class="a" style="left:1076px;top:157px;width:2px;height:557px;background:#0a2a9a"></div>
<div class="a" style="left:211px;top:712px;width:867px;height:2px;background:#0a2a9a"></div>
</div>
<div id="frame"></div>
</body></html>
